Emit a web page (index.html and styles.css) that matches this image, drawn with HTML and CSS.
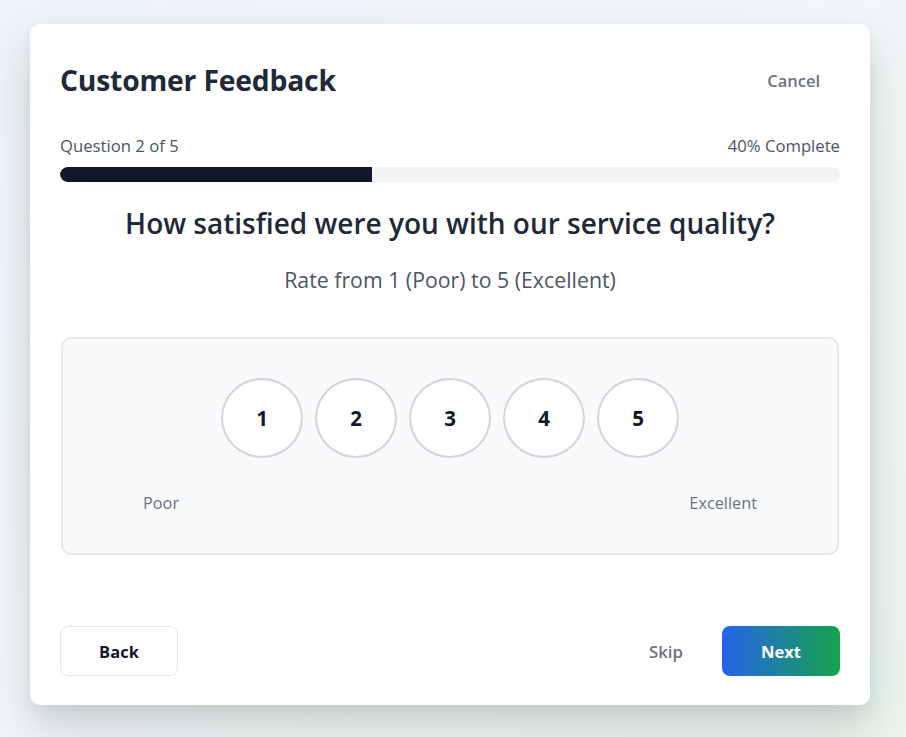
FILE: index.html
```html
<!DOCTYPE html>
<html lang="en">
<head>
<meta charset="utf-8">
<title>Customer Feedback</title>
<link rel="stylesheet" href="styles.css">
</head>
<body>
<div class="page">
  <div class="card">
    <header class="header">
      <h1 class="title">Customer Feedback</h1>
      <button class="cancel">Cancel</button>
    </header>
    <div class="progress-info">
      <span>Question 2 of 5</span>
      <span>40% Complete</span>
    </div>
    <div class="track"><div class="fill" style="width:40%"></div></div>
    <h2 class="question">How satisfied were you with our service quality?</h2>
    <p class="hint">Rate from 1 (Poor) to 5 (Excellent)</p>
    <div class="rating">
      <div class="circles">
        <button class="circle">1</button>
        <button class="circle">2</button>
        <button class="circle">3</button>
        <button class="circle">4</button>
        <button class="circle">5</button>
      </div>
      <div class="labels">
        <span>Poor</span>
        <span>Excellent</span>
      </div>
    </div>
    <footer class="footer">
      <button class="back">Back</button>
      <div class="right">
        <button class="skip">Skip</button>
        <button class="next">Next</button>
      </div>
    </footer>
  </div>
</div>
</body>
</html>
```
FILE: styles.css
```css
* { box-sizing: border-box; }
html, body { margin: 0; padding: 0; }
body {
  font-family: "Open Sans", "Noto Sans", sans-serif;
  background: linear-gradient(135deg, #edf4fb 0%, #f2f7f9 50%, #e9f6ee 100%);
  min-height: 737px;
  width: 906px;
}
.page {
  padding: 24px 36px 32px 30px;
}
.card {
  width: 840px;
  background: #fff;
  border-radius: 10px;
  box-shadow: 0 22px 45px rgba(30, 50, 45, 0.2), 0 4px 12px rgba(30, 50, 45, 0.05);
  padding: 30px;
  height: 681px;
}
.header {
  display: flex;
  justify-content: space-between;
  align-items: center;
  height: 52px;
  margin-bottom: 29px;
}
.title {
  margin: 0;
  font-size: 28.3px;
  font-weight: 700;
  color: #1f2937;
  letter-spacing: -0.2px;
}
.cancel {
  background: none;
  border: none;
  font-family: inherit;
  font-size: 16.5px;
  font-weight: 600;
  color: #6b7280;
  padding: 8px 20px;
}
.progress-info {
  display: flex;
  justify-content: space-between;
  font-size: 16.7px;
  color: #4b5563;
  line-height: 22px;
  margin-bottom: 10px;
}
.track {
  height: 15px;
  background: #f3f4f6;
  border-radius: 8px;
  overflow: hidden;
}
.fill {
  height: 100%;
  background: #111827;
  border-radius: 8px 0 0 8px;
}
.question {
  margin: 23px 0 0 0;
  text-align: center;
  font-size: 28px;
  font-weight: 600;
  color: #1f2937;
  line-height: 36px;
}
.hint {
  margin: 25px 0 0 0;
  text-align: center;
  font-size: 21.3px;
  color: #4b5563;
  line-height: 28px;
}
.rating {
  margin: 43px 1px 0 1px;
  background: #f9fafb;
  border: 2px solid #e5e7eb;
  border-radius: 10px;
  padding: 39px 80px 38px 80px;
  height: 218px;
}
.circles {
  display: flex;
  justify-content: center;
  gap: 12px;
}
.circle {
  width: 82px;
  height: 80px;
  border-radius: 50%;
  border: 2px solid #d1d5db;
  background: #fff;
  font-family: inherit;
  font-size: 20.5px;
  font-weight: 700;
  color: #111827;
  padding: 0;
}
.labels {
  display: flex;
  justify-content: space-between;
  margin-top: 34px;
  font-size: 16.3px;
  color: #6b7280;
  line-height: 22px;
}
.footer {
  display: flex;
  justify-content: space-between;
  align-items: center;
  margin-top: 71px;
}
.back {
  width: 118px;
  height: 50px;
  background: #fff;
  border: 1px solid #e2e6f0;
  border-radius: 8px;
  font-family: inherit;
  font-size: 16.5px;
  font-weight: 700;
  color: #111827;
}
.right {
  display: flex;
  align-items: center;
  gap: 21px;
}
.skip {
  background: none;
  border: none;
  font-family: inherit;
  font-size: 16.8px;
  font-weight: 600;
  color: #6b7280;
  padding: 8px 18px;
}
.next {
  width: 118px;
  height: 50px;
  border: none;
  border-radius: 8px;
  background: linear-gradient(90deg, #2563eb 0%, #16a34a 100%);
  font-family: inherit;
  font-size: 16.5px;
  font-weight: 700;
  color: #fff;
}
```
